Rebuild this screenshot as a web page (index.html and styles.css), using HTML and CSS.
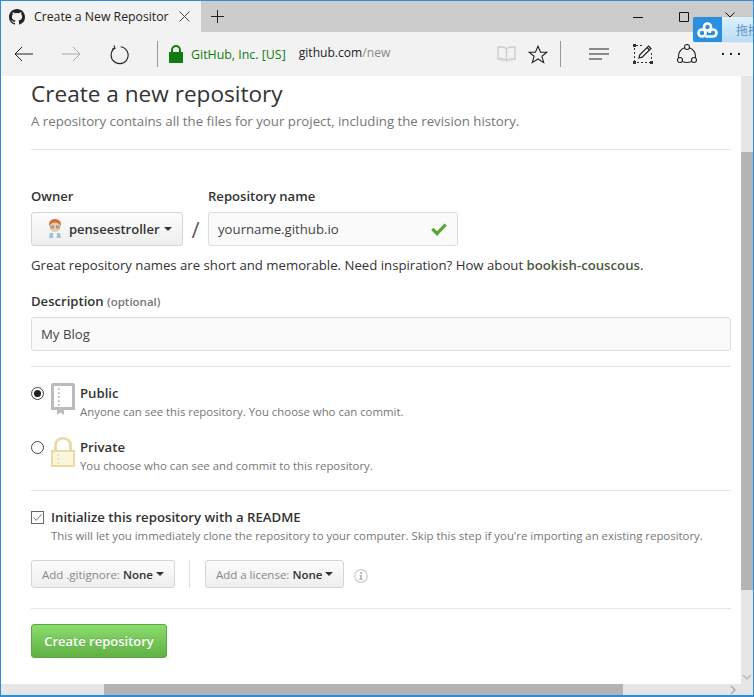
FILE: index.html
```html
<!DOCTYPE html>
<html lang="en">
<head>
  <meta charset="UTF-8">
  <title>Create a New Repository</title>
  <link rel="stylesheet" href="styles.css">
</head>
<body>
  <div class="window">
    <div class="titlebar">
      <div class="tab">
        <svg class="tab-logo" width="16" height="16" viewBox="0 0 16 16"><path fill="#222" d="M8 0C3.58 0 0 3.58 0 8c0 3.54 2.29 6.53 5.47 7.59.4.07.55-.17.55-.38v-1.34c-2.23.48-2.69-1.07-2.69-1.07-.36-.92-.89-1.17-.89-1.17-.73-.5.05-.49.05-.49.8.06 1.23.83 1.23.83.71 1.22 1.87.87 2.33.66.07-.52.28-.87.51-1.07-1.78-.2-3.64-.89-3.64-3.95 0-.87.31-1.59.82-2.15-.08-.2-.36-1.02.08-2.12 0 0 .67-.21 2.2.82a7.5 7.5 0 0 1 4 0c1.53-1.04 2.2-.82 2.2-.82.44 1.1.16 1.92.08 2.12.51.56.82 1.27.82 2.15 0 3.07-1.87 3.75-3.65 3.95.29.25.54.73.54 1.48v2.2c0 .21.15.46.55.38A8 8 0 0 0 16 8c0-4.42-3.58-8-8-8z"/></svg>
        <span class="tab-title">Create a New Repositor</span>
        <svg class="tab-close" width="11" height="11" viewBox="0 0 11 11"><path stroke="#444" fill="none" d="M.5.5l10 10M10.5.5l-10 10"/></svg>
      </div>
      <svg class="new-tab" width="13" height="13" viewBox="0 0 13 13"><path stroke="#222" fill="none" d="M6.5 0v13M0 6.5h13"/></svg>
      <div class="window-buttons">
        <svg width="10" height="10" viewBox="0 0 10 10"><path stroke="#111" d="M0 5.5h10"/></svg>
        <svg width="10" height="10" viewBox="0 0 10 10"><path stroke="#111" fill="none" d="M.5.5h9v9h-9z"/></svg>
        <svg width="10" height="10" viewBox="0 0 10 10"><path stroke="#111" fill="none" d="M.5.5l9 9M9.5.5l-9 9"/></svg>
      </div>
    </div>

    <div class="toolbar">
      <svg class="nav-back" width="19" height="16" viewBox="0 0 19 16"><path stroke="#222" fill="none" d="M19 8H1M8 1L1 8l7 7"/></svg>
      <svg class="nav-forward" width="19" height="16" viewBox="0 0 19 16"><path stroke="#aaa" fill="none" d="M0 8h18M11 1l7 7-7 7"/></svg>
      <svg class="nav-refresh" width="19" height="20" viewBox="0 0 19 20"><path stroke="#222" stroke-width="1.1" fill="none" d="M4.700 3.200a8.500 8.500 0 1 0 6-1.500M4 .5l1 2.800-2.800.8"/></svg>
      <span class="tool-sep"></span>
      <svg class="lock" width="14" height="18" viewBox="0 0 14 18"><path fill="#107c10" d="M0 7h2V5a5 5 0 0 1 10 0v2h2v11H0zM4 7h6V5a3 3 0 0 0-6 0z"/></svg>
      <span class="cert">GitHub, Inc. [US]</span>
      <span class="url">github.com<span class="url-path">/new</span></span>
      <svg class="tool-read" width="19" height="16" viewBox="0 0 19 16"><path stroke="#ccc" stroke-width="1.300" fill="none" d="M9.500 3Q8 1 5 1H1v12h4q3 0 4.500 2 1.500-2 4.500-2h4V1h-4q-3 0-4.500 2zM9.500 3v12"/><path stroke="#ddd" fill="none" d="M3 15h13"/></svg>
      <svg class="tool-star" width="20" height="19" viewBox="0 0 20 19"><path stroke="#222" stroke-width="1.1" fill="none" d="M10 1.2l2.6 6h6.3l-5 4.100 1.800 6.300-5.700-3.600-5.700 3.600 1.800-6.300-5-4.100h6.300z"/></svg>
      <span class="tool-sep tool-sep-right"></span>
      <svg class="tool-hub" width="20" height="12" viewBox="0 0 20 12"><path stroke="#222" stroke-width="1.100" fill="none" d="M0 1h20M0 6h20M0 11h13"/></svg>
      <svg class="tool-note" width="20" height="20" viewBox="0 0 20 20"><path stroke="#333" stroke-dasharray="2 2" fill="none" d="M3 1.500h8M1.500 4v13M18.500 9v8M4 18.500h13"/><path fill="#333" d="M0 0h3v3H0zM0 17h3v3H0zM17 17h3v3h-3z"/><path stroke="#222" stroke-width="1.200" fill="none" d="M6 14l.8-3.200L15.500 2l2.500 2.500-8.800 8.700zM14 3.500l2.500 2.500"/></svg>
      <svg class="tool-share" width="20" height="20" viewBox="0 0 20 20"><g stroke="#222" stroke-width="1.100" fill="none"><circle cx="10" cy="3" r="2.500"/><circle cx="3" cy="16" r="2.500"/><circle cx="17" cy="16" r="2.500"/><path d="M7.700 3.800A8.500 8.500 0 0 0 1.700 13.800M12.300 3.800A8.500 8.500 0 0 1 18.300 13.800M5.400 17.500q4.600 2 9.200 0"/></g></svg>
      <span class="tool-more">
        <i></i><i></i><i></i>
      </span>
    </div>

    <div class="viewport">
      <div class="page">
        <h1>Create a new repository</h1>
        <p class="lead">A repository contains all the files for your project, including the revision history.</p>
        <hr class="rule rule-top">

        <div class="owner-row">
          <div class="field">
            <label>Owner</label>
            <div class="btn owner-btn">
              <svg class="avatar" width="20" height="20" viewBox="0 0 20 20">
                <path fill="#9fc3d8" d="M5 14h10l1 5H4z"/>
                <path fill="#f1f5f7" d="M8 14h4l-.5 5h-3z"/>
                <circle cx="10" cy="7.500" r="5.500" fill="#f0c9a4"/>
                <path fill="#d2712f" d="M4 7q-.5-7 6-7t6 7q-2-3.500-6-3.500T4 7z"/>
                <path fill="#8f9ea6" d="M5.500 6.500h3.500v3H5.500zM11 6.500h3.500v3H11z"/>
              </svg>
              <span>penseestroller</span>
              <i class="caret"></i>
            </div>
          </div>
          <span class="slash">/</span>
          <div class="field">
            <label>Repository name</label>
            <div class="input name-input">
              <span>yourname.github.io</span>
              <svg width="16" height="13" viewBox="0 0 12 10"><path fill="#55a532" d="M12 2l-7.500 8L0 5.300 1.700 3.600l2.800 2.800L10.300.3z"/></svg>
            </div>
          </div>
        </div>

        <p class="hint">Great repository names are short and memorable. Need inspiration? How about <strong>bookish-couscous</strong>.</p>

        <label class="desc-label">Description <span class="optional">(optional)</span></label>
        <div class="input desc-input">My Blog</div>
        <hr class="rule rule-desc">

        <div class="choice choice-public">
          <span class="radio radio-on"></span>
          <svg class="choice-icon" width="24" height="32" viewBox="0 0 24 32">
            <path fill="#bbb" fill-rule="evenodd" d="M2 0h20a2 2 0 0 1 2 2v25H0V2a2 2 0 0 1 2-2zm1 3v21h18V3z"/>
            <path fill="#bbb" d="M7 5h1.500v2H7zM7 9h1.500v2H7zM7 13h1.500v2H7zM7 17h1.500v2H7zM7 21h1.500v2H7zM6 27h7v5l-3.500-2.500L6 32z"/>
          </svg>
          <div class="choice-text">
            <div class="choice-title">Public</div>
            <div class="note">Anyone can see this repository. You choose who can commit.</div>
          </div>
        </div>

        <div class="choice choice-private">
          <span class="radio"></span>
          <svg class="choice-icon" width="24" height="30" viewBox="0 0 24 30">
            <path fill="#e9dba5" fill-rule="evenodd" d="M0 13h3V8a9 8 0 0 1 18 0v5h3v17H0zM6 13h12V8a6 5.500 0 0 0-12 0z"/>
            <path fill="#fbf5dc" d="M2 15h20v13H2z"/>
            <path fill="#e9dba5" d="M6.500 17H8v2H6.500zM6.500 21H8v2H6.500zM6.500 25H8v2H6.500z"/>
          </svg>
          <div class="choice-text">
            <div class="choice-title">Private</div>
            <div class="note">You choose who can see and commit to this repository.</div>
          </div>
        </div>

        <hr class="rule rule-private">

        <div class="readme">
          <span class="checkbox">
            <svg width="11" height="9" viewBox="0 0 11 9"><path stroke="#555" fill="none" d="M.5 4.500L4 8l6.500-7.500"/></svg>
          </span>
          <div class="choice-text">
            <div class="choice-title">Initialize this repository with a README</div>
            <div class="note">This will let you immediately clone the repository to your computer. Skip this step if you're importing an existing repository.</div>
          </div>
        </div>

        <div class="extras">
          <div class="btn small-btn"><span class="muted">Add .gitignore:</span> <b>None</b><i class="caret"></i></div>
          <span class="extras-sep"></span>
          <div class="btn small-btn"><span class="muted">Add a license:</span> <b>None</b><i class="caret"></i></div>
          <svg class="info" width="14" height="14" viewBox="0 0 14 14"><circle cx="7" cy="7" r="6.300" fill="none" stroke="#ccc" stroke-width="1.200"/><path fill="#bbb" d="M6 3h2v2H6zM5.500 6H8v4h1v1H5v-1h1V7h-.5z"/></svg>
        </div>

        <hr class="rule rule-extras">

        <div class="create-btn">Create repository</div>
      </div>

      <div class="vscroll">
        <div class="vthumb"></div>
        <svg class="arrow-down" width="10" height="6" viewBox="0 0 10 6"><path stroke="#bbb" stroke-width="1.500" fill="none" d="M1 1l4 4 4-4"/></svg>
      </div>
    </div>

    <div class="hscroll">
      <div class="hthumb"></div>
      <svg class="arrow-right" width="6" height="10" viewBox="0 0 6 10"><path stroke="#aaa" stroke-width="1.500" fill="none" d="M1 1l4 4-4 4"/></svg>
    </div>

    <div class="cloud-widget">
      <div class="cloud-icon">
        <svg width="21" height="16" viewBox="0 0 21 16"><g fill="none" stroke="#fff" stroke-width="2.600"><circle cx="10.500" cy="5" r="3.500"/><circle cx="5" cy="11" r="3.500"/><path d="M8.500 14.500H16a3.500 3.500 0 1 0-3.500-3.500"/></g></svg>
      </div>
      <div class="cloud-label">拖拽</div>
    </div>
  </div>
</body>
</html>
```

FILE: styles.css
```css
html, body {
  margin: 0;
  height: 100%;
}

body {
  font-family: "Open Sans", "Noto Sans", sans-serif;
  color: #333;
  overflow: hidden;
}

.window {
  position: relative;
  width: 754px;
  height: 697px;
  box-sizing: border-box;
  border: 1px solid #2b8ddb;
  border-bottom-width: 2px;
  display: flex;
  flex-direction: column;
  overflow: hidden;
  background-color: #fff;
}

/* title bar */
.titlebar {
  height: 31px;
  flex: none;
  background-color: #cccccc;
  display: flex;
  align-items: center;
}

.tab {
  width: 200px;
  height: 31px;
  background-color: #f2f2f2;
  display: flex;
  align-items: center;
  box-sizing: border-box;
  padding-left: 8px;
  overflow: hidden;
}

.tab-title {
  margin-left: 9px;
  font-size: 12.250px;
  color: #222;
  white-space: nowrap;
  width: 136px;
  flex: none;
  overflow: hidden;
}

.tab-close {
  margin-left: 9px;
  flex: none;
}

.new-tab {
  margin-left: 10px;
}

.window-buttons {
  margin-left: auto;
  margin-right: 18px;
  display: flex;
  gap: 36px;
}

/* address bar */
.toolbar {
  height: 44px;
  flex: none;
  background-color: #f2f2f2;
  display: flex;
  align-items: center;
  padding-left: 13px;
}

.nav-forward {
  margin-left: 29px;
}

.nav-refresh {
  margin-left: 29px;
  margin-top: 1px;
}

.tool-sep {
  width: 1px;
  height: 26px;
  background-color: #999;
  margin-left: 28px;
  flex: none;
}

.lock {
  margin-left: 11px;
}

.cert {
  margin-left: 8px;
  font-size: 12.400px;
  color: #107c10;
  white-space: nowrap;
}

.url {
  margin-left: 13px;
  font-size: 12.100px;
  color: #222;
  margin-top: -3px;
}

.url-path {
  color: #888;
}

.tool-read {
  margin-left: 107px;
}

.tool-star {
  margin-left: 12px;
}

.tool-sep-right {
  margin-left: 12px;
}

.tool-hub {
  margin-left: 28px;
}

.tool-note {
  margin-left: 24px;
}

.tool-share {
  margin-left: 24px;
}

.tool-more {
  margin-left: 25px;
  display: flex;
  gap: 6px;
}

.tool-more i {
  width: 2px;
  height: 2px;
  background-color: #222;
}

/* page */
.viewport {
  flex: 1;
  display: flex;
  min-height: 0;
}

.page {
  flex: 1;
  box-sizing: border-box;
  padding: 2px 10px 0 30px;
  overflow: hidden;
}

h1 {
  font-size: 22.600px;
  font-weight: 400;
  line-height: 32px;
  margin: 0;
  color: #333;
}

.lead {
  margin: 1px 0 0;
  font-size: 13.250px;
  line-height: 20px;
  color: #767676;
}

.rule {
  border: 0;
  border-top: 1px solid #e5e5e5;
  margin: 0;
}

.rule-top {
  margin-top: 18px;
}

.owner-row {
  margin-top: 36px;
  display: flex;
  align-items: flex-end;
}

.field {
  display: flex;
  flex-direction: column;
}

label {
  font-size: 13.100px;
  font-weight: 600;
  line-height: 20px;
}

.field label {
  margin-bottom: 6px;
}

.btn {
  box-sizing: border-box;
  border: 1px solid #d5d5d5;
  border-radius: 3px;
  background: linear-gradient(#fcfcfc, #eeeeee);
  display: flex;
  align-items: center;
  white-space: nowrap;
}

.owner-btn {
  width: 152px;
  height: 34px;
  padding-left: 13px;
  font-size: 13px;
  font-weight: 600;
}

.avatar {
  margin-right: 4px;
}

.caret {
  display: inline-block;
  width: 0;
  height: 0;
  border: 4px solid transparent;
  border-top-color: #333;
  border-bottom-width: 0;
  margin-left: 4px;
}

.slash {
  width: 25px;
  text-align: center;
  font-size: 22px;
  line-height: 34px;
  color: #586069;
}

.input {
  box-sizing: border-box;
  height: 34px;
  border: 1px solid #ddd;
  border-radius: 3px;
  background-color: #fafafa;
  font-size: 13.200px;
  display: flex;
  align-items: center;
  padding: 0 9px;
  color: #444;
}

.name-input {
  width: 250px;
  justify-content: space-between;
  padding-right: 10px;
}

.hint {
  margin: 9px 0 0;
  font-size: 13.200px;
  line-height: 20px;
  white-space: nowrap;
}

.hint strong {
  font-weight: 600;
  color: #4a5a3c;
}

.desc-label {
  display: block;
  margin-top: 16px;
}

.optional {
  font-size: 11.500px;
  color: #767676;
}

.desc-input {
  margin-top: 5px;
  width: 700px;
}

.rule-desc {
  margin-top: 15px;
}

.choice {
  display: flex;
  align-items: flex-start;
}

.choice-public {
  margin-top: 16px;
  height: 54px;
}

.choice-private {
  height: 53px;
}

.radio {
  width: 11px;
  height: 11px;
  border: 1px solid #444;
  border-radius: 50%;
  background-color: #fff;
  flex: none;
  margin-top: 4px;
  position: relative;
}

.radio-on::after {
  content: "";
  position: absolute;
  left: 2px;
  top: 2px;
  width: 7px;
  height: 7px;
  border-radius: 50%;
  background-color: #222;
}

.choice-icon {
  margin-left: 7px;
  flex: none;
}

.choice-text {
  margin-left: 5px;
}

.choice-title {
  font-size: 13.200px;
  font-weight: 600;
  line-height: 20px;
}

.note {
  font-size: 11.400px;
  line-height: 18px;
  color: #767676;
  white-space: nowrap;
}

.readme {
  margin-top: 16px;
  display: flex;
  align-items: flex-start;
}

.checkbox {
  width: 11px;
  height: 11px;
  border: 1px solid #666;
  flex: none;
  margin-top: 4px;
  display: flex;
  align-items: center;
  justify-content: center;
}

.checkbox svg {
  width: 9px;
}

.readme .choice-text {
  margin-left: 7px;
}

.extras {
  margin-top: 15px;
  display: flex;
  align-items: center;
}

.small-btn {
  height: 28px;
  padding: 0 10px;
  font-size: 11.500px;
  gap: 3px;
}

.small-btn b {
  font-weight: 600;
}

.muted {
  color: #888;
}

.small-btn .caret {
  margin-left: 0;
}

.extras-sep {
  width: 1px;
  height: 28px;
  background-color: #ddd;
  margin: 0 15px 0 14px;
}

.info {
  margin-left: 10px;
  margin-top: 3px;
}

.rule-extras {
  margin-top: 20px;
}

.create-btn {
  margin-top: 15px;
  width: 136px;
  height: 34px;
  box-sizing: border-box;
  border: 1px solid #5ca941;
  border-radius: 3px;
  background: linear-gradient(#8add6d, #60b044);
  color: #fff;
  font-size: 13px;
  font-weight: 600;
  text-align: center;
  line-height: 32px;
  text-shadow: 0 -1px 0 rgba(0, 0, 0, 0.15);
}

/* scrollbars */
.vscroll {
  width: 12px;
  flex: none;
  background-color: #e6e6e6;
  position: relative;
}

.vthumb {
  margin-top: 76px;
  height: 438px;
  background-color: #b4b4b4;
}

.arrow-down {
  position: absolute;
  bottom: 4px;
  left: 1px;
}

.hscroll {
  height: 11px;
  flex: none;
  background-color: #e6e6e6;
  position: relative;
}

.hthumb {
  margin-left: 103px;
  width: 519px;
  height: 11px;
  background-color: #b4b4b4;
}

.arrow-right {
  position: absolute;
  right: 17px;
  top: 1px;
}

/* cloud helper docked over the window corner */
.cloud-widget {
  position: absolute;
  left: 692px;
  top: 16px;
  width: 70px;
  height: 25px;
  display: flex;
  border-radius: 2px 0 0 2px;
  overflow: hidden;
  box-shadow: 0 0 1px rgba(0, 0, 0, 0.3);
}

.cloud-icon {
  width: 29px;
  background-color: #2a8fdf;
  display: flex;
  align-items: center;
  justify-content: center;
  flex: none;
}

.cloud-label {
  flex: 1;
  background: linear-gradient(#ddf0fc, #b9dcf5);
  color: #5b93c4;
  font-family: "Noto Sans CJK SC", sans-serif;
  font-size: 12px;
  line-height: 25px;
  padding-left: 14px;
  white-space: nowrap;
}
```
